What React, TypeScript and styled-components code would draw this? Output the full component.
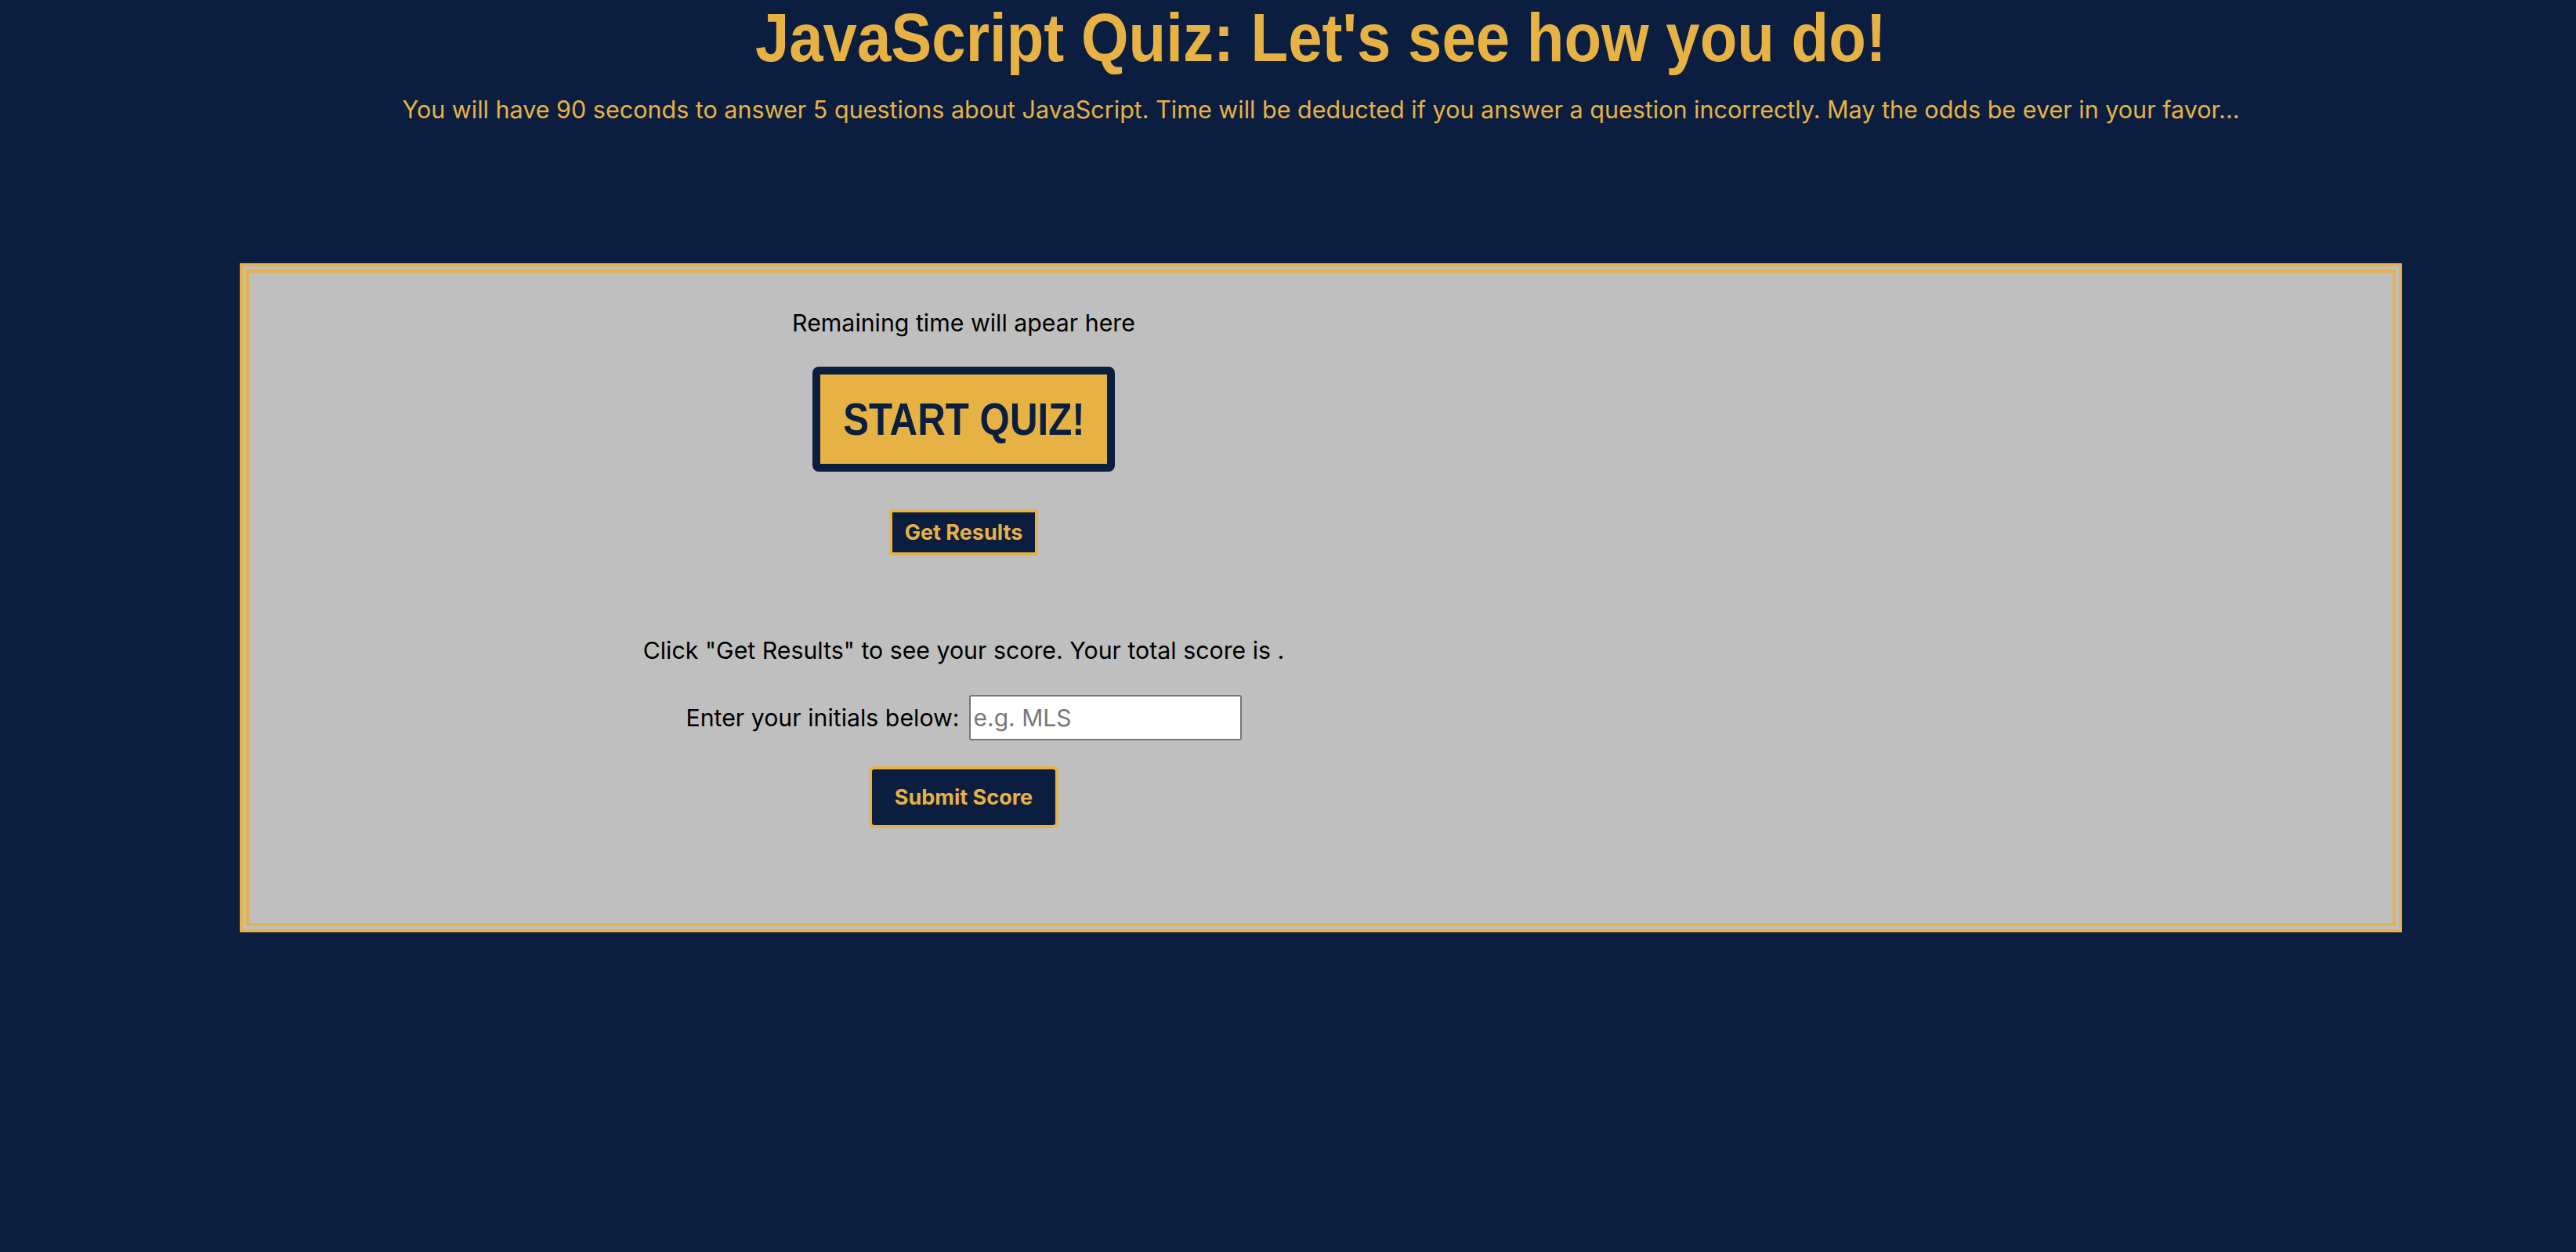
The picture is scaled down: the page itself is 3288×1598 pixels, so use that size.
import React from "react";
import styled, { createGlobalStyle } from "styled-components";

const NAVY = "#0b1e40";
const GOLD = "#e7b244";
const SILVER = "#bfbfbf";

const GlobalStyle = createGlobalStyle`
  html, body {
    margin: 0;
    padding: 0;
    background: ${NAVY};
  }
  body {
    font-family: Inter, "Noto Sans", "Liberation Sans", sans-serif;
    min-height: 1598px;
  }
`;

const Page = styled.div`
  padding: 0 8px 0 92px;
  min-height: 1598px;
  box-sizing: border-box;
`;

const Header = styled.header`
  text-align: center;
`;

const Title = styled.h1`
  margin: 0;
  font-family: "Liberation Sans", Arial, sans-serif;
  font-weight: 700;
  font-size: 88px;
  line-height: 96px;
  color: ${GOLD};
  white-space: nowrap;
`;

/* the reference uses a condensed grotesque; narrow the face horizontally */
const Condensed = styled.span<{ $x: number }>`
  display: inline-block;
  transform: scaleX(${(p) => p.$x});
  transform-origin: center;
`;

const Lead = styled.p`
  margin: 24px 0 0;
  font-size: 30.5px;
  line-height: 40px;
  color: ${GOLD};
`;

const Panel = styled.main`
  width: 2760px;
  box-sizing: border-box;
  margin: 176px auto 0;
  border: 12px double ${GOLD};
  background: ${SILVER};
  padding: 46px 0 121px;
`;

const Column = styled.section`
  width: 66.6667%;
  display: flex;
  flex-direction: column;
  align-items: center;
  text-align: center;
  color: #000;
`;

const Line = styled.p<{ $top?: number }>`
  margin: ${(p) => p.$top ?? 0}px 0 0;
  font-size: 30.3px;
  line-height: 36px;
`;

const StartButton = styled.button`
  margin-top: 38px;
  width: 386px;
  height: 134px;
  box-sizing: border-box;
  display: flex;
  align-items: center;
  justify-content: center;
  background: ${GOLD};
  color: ${NAVY};
  border: 10px solid ${NAVY};
  border-radius: 8px;
  padding: 0;
  font-family: "Liberation Sans", Arial, sans-serif;
  font-weight: 700;
  font-size: 58px;
  line-height: 58px;
  white-space: nowrap;
  cursor: pointer;
`;

const DarkButton = styled.button<{ $top: number; $rounded?: boolean; $padY: number; $padX: number }>`
  margin-top: ${(p) => p.$top}px;
  background: ${NAVY};
  color: ${GOLD};
  border: 4px solid ${GOLD};
  border-radius: ${(p) => (p.$rounded ? "7px" : "0")};
  padding: ${(p) => p.$padY}px ${(p) => p.$padX}px;
  font-family: Inter, "Noto Sans", "Liberation Sans", sans-serif;
  font-weight: 700;
  font-size: 27px;
  line-height: 33px;
  cursor: pointer;
`;

const InitialsRow = styled.div`
  margin-top: 39px;
  display: flex;
  align-items: baseline;
  gap: 12px;
  font-size: 30.3px;
  line-height: 36px;
`;

const InitialsInput = styled.input`
  width: 348px;
  height: 58px;
  box-sizing: border-box;
  border: 2px solid #767676;
  border-radius: 3px;
  background: #fff;
  padding: 0 4px;
  font-family: Inter, "Noto Sans", "Liberation Sans", sans-serif;
  font-size: 30px;
  color: #000;
  &::placeholder {
    color: #777;
  }
`;

export default function App() {
  return (
    <>
      <GlobalStyle />
      <Page>
        <Header>
          <Title>
            <Condensed $x={0.886}>JavaScript Quiz: Let's see how you do!</Condensed>
          </Title>
          <Lead>
            You will have 90 seconds to answer 5 questions about JavaScript. Time will be deducted if you
            answer a question incorrectly. May the odds be ever in your favor...
          </Lead>
        </Header>
        <Panel>
          <Column>
            <Line>Remaining time will apear here</Line>
            <StartButton>
              <Condensed $x={0.85}>START QUIZ!</Condensed>
            </StartButton>
            <DarkButton $top={48} $padY={9} $padX={16}>
              Get Results
            </DarkButton>
            <Line $top={103}>Click "Get Results" to see your score. Your total score is .</Line>
            <InitialsRow>
              <span>Enter your initials below:</span>
              <InitialsInput placeholder="e.g. MLS" />
            </InitialsRow>
            <DarkButton $top={33} $rounded $padY={19} $padX={29}>
              Submit Score
            </DarkButton>
          </Column>
        </Panel>
      </Page>
    </>
  );
}
